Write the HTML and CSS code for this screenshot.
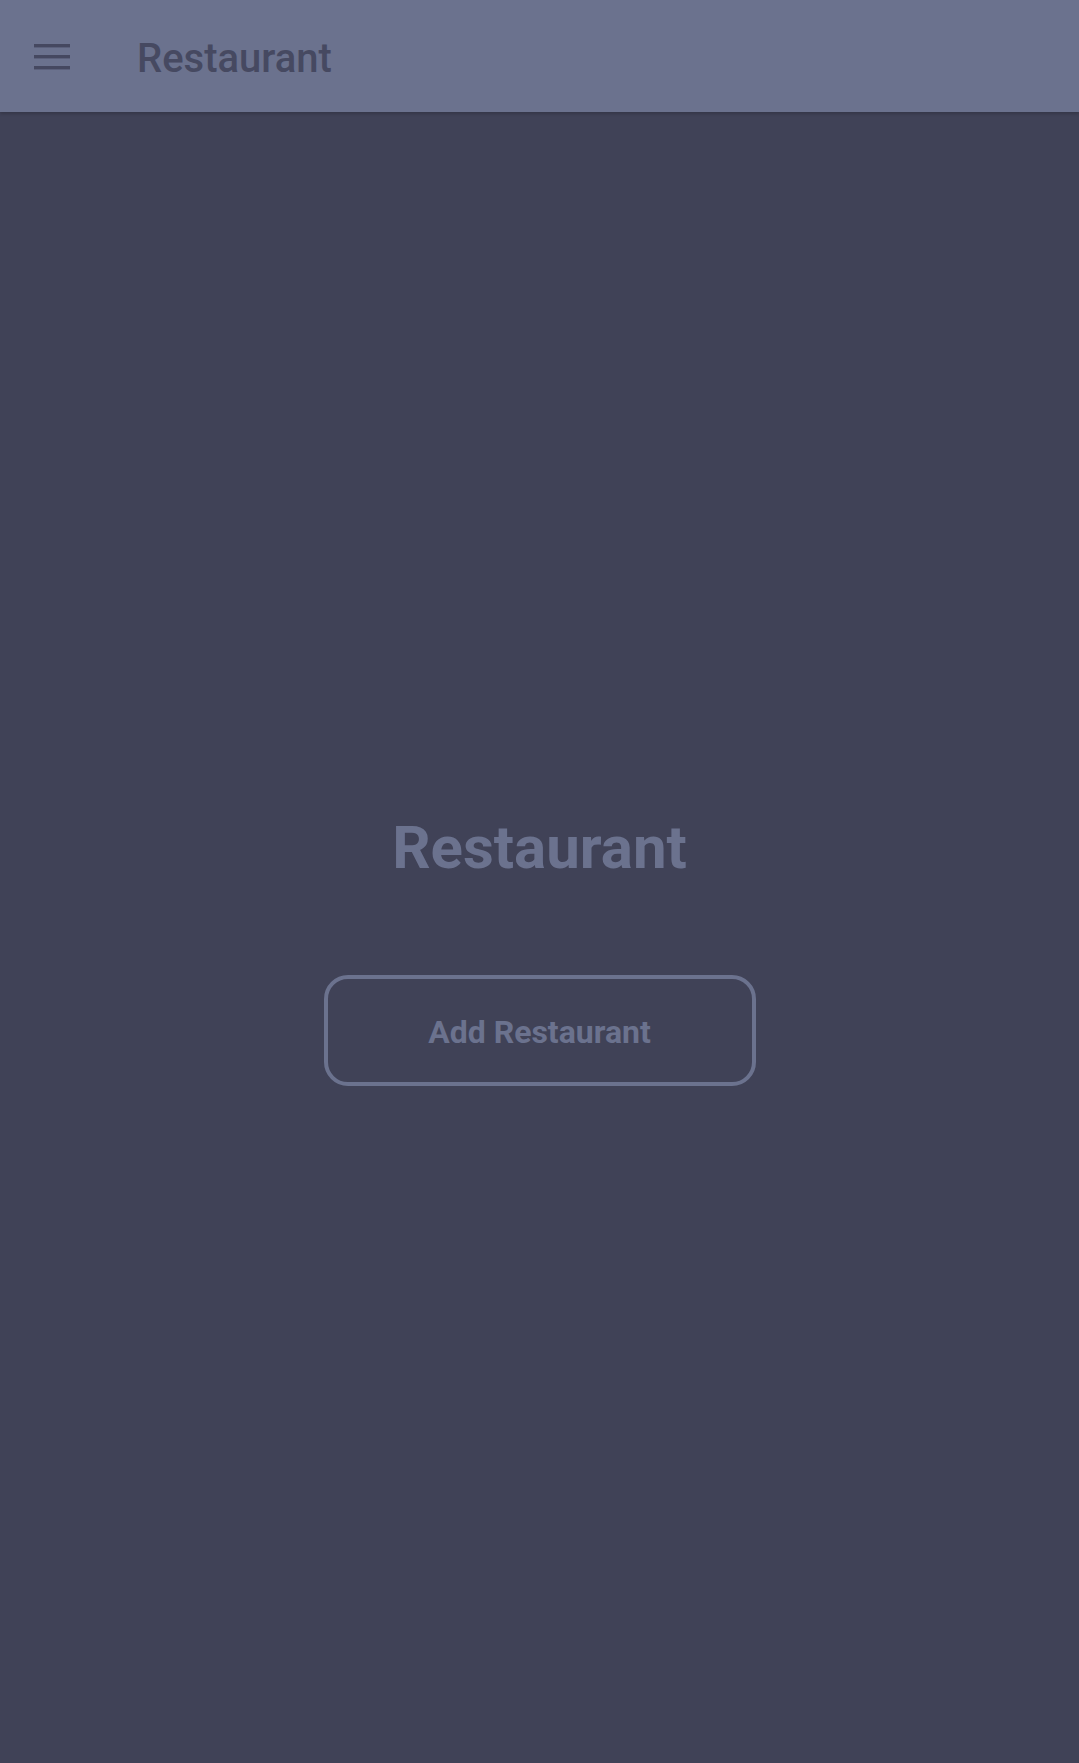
FILE: index.html
```html
<!DOCTYPE html>
<html>
<head>
<meta charset="utf-8">
<link rel="stylesheet" href="styles.css">
</head>
<body>
<header class="toolbar">
  <svg class="menu-icon" width="36" height="26" viewBox="0 0 36 26">
    <rect x="0" y="0" width="36" height="3.4" fill="#454860"/>
    <rect x="0" y="11" width="36" height="3.4" fill="#454860"/>
    <rect x="0" y="22" width="36" height="3.4" fill="#454860"/>
  </svg>
  <div class="toolbar-title">Restaurant</div>
</header>
<main class="content">
  <h1 class="heading">Restaurant</h1>
  <button class="add-btn">Add Restaurant</button>
</main>
</body>
</html>
```
FILE: styles.css
```css
html, body {
  margin: 0;
  padding: 0;
  height: 100%;
}
body {
  background: #404257;
  font-family: Roboto, "Liberation Sans", sans-serif;
  overflow: hidden;
}
.toolbar {
  height: 112px;
  background: #6b728e;
  display: flex;
  align-items: center;
  box-shadow: 0 2px 3px rgba(0,0,0,0.18);
  position: relative;
  z-index: 1;
}
.menu-icon {
  margin-left: 34px;
  margin-top: 2px;
  display: block;
}
.toolbar-title {
  margin-left: 67px;
  font-size: 40px;
  font-weight: 500;
  color: #464961;
  padding-top: 5px;
}
.content {
  display: flex;
  flex-direction: column;
  align-items: center;
  padding-top: 700px;
}
.heading {
  margin: 0;
  font-size: 60px;
  line-height: 72px;
  font-weight: 700;
  color: #6b728e;
}
.add-btn {
  margin-top: 91px;
  width: 432px;
  height: 111px;
  border: 4px solid #6b728e;
  border-radius: 24px;
  background: transparent;
  color: #6b728e;
  font-family: Roboto, "Liberation Sans", sans-serif;
  font-size: 32px;
  font-weight: 700;
  padding: 2px 0 0 0;
}
```
